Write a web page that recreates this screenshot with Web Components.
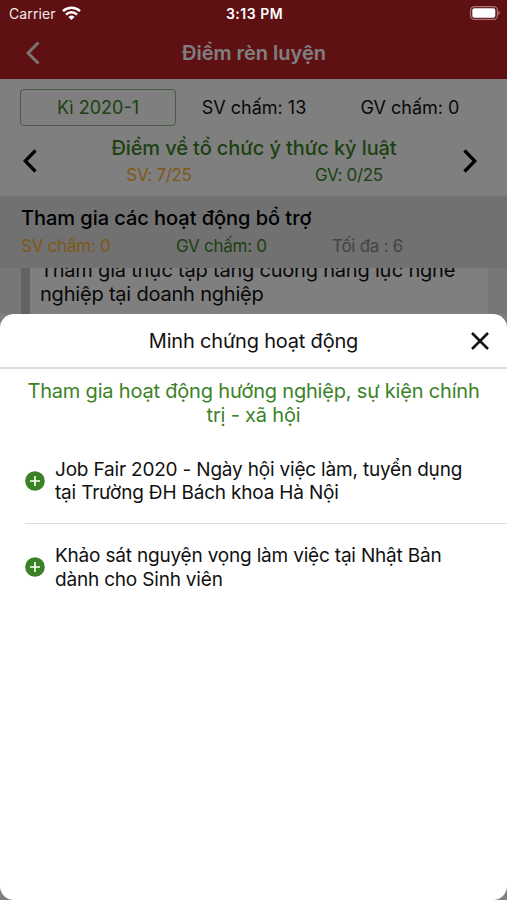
<!DOCTYPE html>
<html lang="vi">
<head>
<meta charset="utf-8">
<meta name="viewport" content="width=device-width, initial-scale=1">
<title>Điểm rèn luyện</title>
<style>
    html, body{
        margin: 0;
        height: 100%;
        overflow: hidden;
    }
    body{
        font-family: Inter, "Noto Sans", sans-serif;
        color: #111;
    }
</style>
</head>
<body>
<training-app></training-app>

<script>
class AppIcon extends HTMLElement{
    constructor(){
        super()
        const icons = {
            back: `<svg width="14" height="24" viewBox="0 0 14 24" fill="none" stroke="currentColor" stroke-width="3"><path d="M12.5 1.5 2 12l10.5 10.5"/></svg>`,
            prev: `<svg width="14" height="24" viewBox="0 0 14 24" fill="none" stroke="currentColor" stroke-width="3.3"><path d="M12.5 1.5 2.2 12l10.3 10.5"/></svg>`,
            next: `<svg width="14" height="24" viewBox="0 0 14 24" fill="none" stroke="currentColor" stroke-width="3.3"><path d="M1.5 1.5 11.8 12 1.5 22.5"/></svg>`,
            close: `<svg width="18" height="18" viewBox="0 0 18 18" fill="none" stroke="currentColor" stroke-width="2.5"><path d="m1 1 16 16M17 1 1 17"/></svg>`,
            plus: `<svg width="20" height="20" viewBox="0 0 20 20"><circle cx="10" cy="10" r="9.8" fill="#3b8226"/><path d="M10 5v10M5 10h10" stroke="#fff" stroke-width="1.6"/></svg>`,
            wifi: `<svg width="19" height="14" viewBox="0 0 19 14" fill="none" stroke="#fff" stroke-width="2.5"><path d="M1 5.2a12.3 12.3 0 0 1 17 0M4 8.6a7.8 7.8 0 0 1 11 0"/><path d="M9.5 14 6.4 10.9a4.5 4.5 0 0 1 6.2 0z" fill="#fff" stroke="none"/></svg>`,
            battery: `<svg width="30" height="14" viewBox="0 0 30 14"><rect x=".6" y=".6" width="26.8" height="12.8" rx="3.6" fill="none" stroke="#a87476" stroke-width="1.2"/><rect x="2.3" y="2.3" width="23" height="9.4" rx="2" fill="#fff"/><path d="M28.4 4.8q1.5.6 1.5 2.2t-1.5 2.2z" fill="#a87476"/></svg>`
        }
        this.attachShadow({mode: "open"}).innerHTML = `
            <style>
            :host{ display: flex; flex: none; }
            svg{ display: block; }
            </style>
            ${icons[this.getAttribute("name")] || ""}
        `
    }
}
customElements.define("app-icon", AppIcon)

class StatusBar extends HTMLElement{
    constructor(){
        super()
        this.attachShadow({mode: "open"}).innerHTML = `
            <style>
            :host{
                display: grid;
                grid-template-columns: 1fr auto 1fr;
                align-items: center;
                height: 26px;
                padding: 0 7px 0 9px;
                box-sizing: border-box;
                color: #fff;
                font-size: 14px;
            }
            div{ display: flex; align-items: center; gap: 6px; }
            .carrier{ color: #f5e9e9; letter-spacing: .1px; }
            b{ font-weight: 600; letter-spacing: .5px; }
            .right{ justify-content: flex-end; }
            </style>
            <div><span class="carrier">Carrier</span><app-icon name="wifi"></app-icon></div>
            <b>3:13 PM</b>
            <div class="right"><app-icon name="battery"></app-icon></div>
        `
    }
}
customElements.define("status-bar", StatusBar)

class NavBar extends HTMLElement{
    constructor(){
        super()
        this.attachShadow({mode: "open"}).innerHTML = `
            <style>
            :host{
                display: grid;
                grid-template-columns: 1fr auto 1fr;
                align-items: center;
                height: 79px;
                padding: 26px 25px 0 26px;
                box-sizing: border-box;
                background: #bc2026;
                color: #fff;
            }
            h1{ margin: 0; font-size: 20px; font-weight: 600; color: #fff; }
            app-icon{ opacity: .9; }
            </style>
            <app-icon name="back"></app-icon>
            <h1><slot></slot></h1>
        `
    }
}
customElements.define("nav-bar", NavBar)

class ScoreSummary extends HTMLElement{
    constructor(){
        super()
        this.attachShadow({mode: "open"}).innerHTML = `
            <style>
            :host{
                display: grid;
                grid-template-columns: repeat(3, 156px);
                align-items: center;
                padding: 10px 0 0 20px;
                font-size: 18px;
                text-align: center;
            }
            .term{
                height: 37px;
                line-height: 35px;
                box-sizing: border-box;
                border: 1px solid #8fb586;
                border-radius: 4px;
                color: #3b8226;
            }
            </style>
            <div class="term"><slot name="term"></slot></div>
            <slot name="student"></slot>
            <slot name="teacher"></slot>
        `
    }
}
customElements.define("score-summary", ScoreSummary)

class CriteriaPager extends HTMLElement{
    constructor(){
        super()
        this.attachShadow({mode: "open"}).innerHTML = `
            <style>
            :host{
                display: grid;
                grid-template-columns: 45px 380px 45px;
                align-items: center;
                height: 70px;
                padding-left: 19px;
                box-sizing: border-box;
                color: #000;
            }
            app-icon{ padding-left: 4px; }
            app-icon:last-child{ padding-left: 19px; }
            .info{ text-align: center; }
            h2{ margin: 0; font-size: 20px; line-height: 28px; font-weight: 500; letter-spacing: -.1px; color: #3b8226; }
            .marks{
                display: grid;
                grid-template-columns: 1fr 1fr;
                font-size: 17px;
                line-height: 26px;
                letter-spacing: -.3px;
            }
            .sv{ color: #ffb02e; }
            .gv{ color: #3b8226; }
            </style>
            <app-icon name="prev"></app-icon>
            <div class="info">
                <h2><slot></slot></h2>
                <div class="marks"><span class="sv">SV: 7/25</span><span class="gv">GV: 0/25</span></div>
            </div>
            <app-icon name="next"></app-icon>
        `
    }
}
customElements.define("criteria-pager", CriteriaPager)

class GroupHeader extends HTMLElement{
    constructor(){
        super()
        this.attachShadow({mode: "open"}).innerHTML = `
            <style>
            :host{
                display: block;
                height: 72px;
                padding: 8px 21px 0;
                box-sizing: border-box;
                background: #e2e2e2;
            }
            h3{ margin: 0; font-size: 20px; line-height: 29px; font-weight: 500; letter-spacing: -.04px; color: #000; }
            .marks{
                display: grid;
                grid-template-columns: 155px 156px 1fr;
                font-size: 17px;
                line-height: 26px;
                letter-spacing: -.26px;
            }
            .sv{ color: #ffb02e; }
            .gv{ color: #3b8226; }
            .max{ color: #888; }
            </style>
            <h3><slot></slot></h3>
            <div class="marks"><span class="sv">SV chấm: 0</span><span class="gv">GV chấm: 0</span><span class="max">Tối đa : 6</span></div>
        `
    }
}
customElements.define("group-header", GroupHeader)

class ActivityCard extends HTMLElement{
    constructor(){
        super()
        this.attachShadow({mode: "open"}).innerHTML = `
            <style>
            :host{
                display: flex;
                align-items: flex-end;
                height: 46px;
                overflow: hidden;
                padding: 0 19px 0 21px;
                background: #eeeef3;
            }
            div{
                flex: 1;
                border-left: 9px solid #c4c4c4;
                background: #fff;
                padding: 0 0 8px 10px;
                font-size: 20px;
                line-height: 24px;
                letter-spacing: -.2px;
            }
            </style>
            <div><slot></slot></div>
        `
    }
}
customElements.define("activity-card", ActivityCard)

class ProofItem extends HTMLElement{
    constructor(){
        super()
        this.attachShadow({mode: "open"}).innerHTML = `
            <style>
            :host{
                display: flex;
                align-items: center;
                gap: 10px;
                height: 86px;
                margin-left: 25px;
                box-sizing: border-box;
                font-size: 19px;
                line-height: 23.5px;
                letter-spacing: -.19px;
                white-space: nowrap;
            }
            :host(:not(:last-child)){ border-bottom: 1px solid #dedede; }
            div{ padding-top: 1px; }
            </style>
            <app-icon name="plus"></app-icon>
            <div><slot></slot></div>
        `
    }
}
customElements.define("proof-item", ProofItem)

class BottomSheet extends HTMLElement{
    constructor(){
        super()
        this.attachShadow({mode: "open"}).innerHTML = `
            <style>
            :host{
                display: block;
                height: 586px;
                box-sizing: border-box;
                border-radius: 14px;
                background: #fff;
            }
            header{
                display: grid;
                grid-template-columns: 1fr auto 1fr;
                align-items: center;
                height: 55px;
                padding: 0 18px;
                box-sizing: border-box;
                border-bottom: 2px solid #dcdcdc;
                font-size: 20px;
                letter-spacing: -.2px;
            }
            header span{ grid-column: 2; }
            app-icon{ justify-self: end; }
            .caption{
                margin: 10px 0 11px;
                font-size: 20px;
                line-height: 24px;
                letter-spacing: -.19px;
                text-align: center;
                color: #3b8226;
            }
            </style>
            <header><span><slot name="title"></slot></span><app-icon name="close"></app-icon></header>
            <p class="caption"><slot name="caption"></slot></p>
            <slot></slot>
        `
    }
}
customElements.define("bottom-sheet", BottomSheet)

class TrainingApp extends HTMLElement{
    constructor(){
        super()
        this.attachShadow({mode: "open"}).innerHTML = `
            <style>
            :host{
                display: block;
                position: relative;
                width: 507px;
                height: 900px;
                overflow: hidden;
                background: #fff;
            }
            .backdrop{
                position: absolute;
                inset: 0;
                display: flex;
                flex-direction: column;
                justify-content: space-between;
                background: rgba(0, 0, 0, .5);
            }
            </style>
            <nav-bar>Điểm rèn luyện</nav-bar>
            <score-summary>
                <span slot="term">Kì 2020-1</span>
                <span slot="student">SV chấm: 13</span>
                <span slot="teacher">GV chấm: 0</span>
            </score-summary>
            <criteria-pager>Điểm về tổ chức ý thức kỷ luật</criteria-pager>
            <group-header>Tham gia các hoạt động bổ trợ</group-header>
            <activity-card>Tham gia thực tập tăng cường năng lực nghề<br>nghiệp tại doanh nghiệp</activity-card>
            <div class="backdrop">
                <status-bar></status-bar>
                <bottom-sheet>
                    <span slot="title">Minh chứng hoạt động</span>
                    <span slot="caption">Tham gia hoạt động hướng nghiệp, sự kiện chính<br>trị - xã hội</span>
                    <proof-item>Job Fair 2020 - Ngày hội việc làm, tuyển dụng<br>tại Trường ĐH Bách khoa Hà Nội</proof-item>
                    <proof-item>Khảo sát nguyện vọng làm việc tại Nhật Bản<br>dành cho Sinh viên</proof-item>
                </bottom-sheet>
            </div>
        `
    }
}
customElements.define("training-app", TrainingApp)
</script>
</body>
</html>
